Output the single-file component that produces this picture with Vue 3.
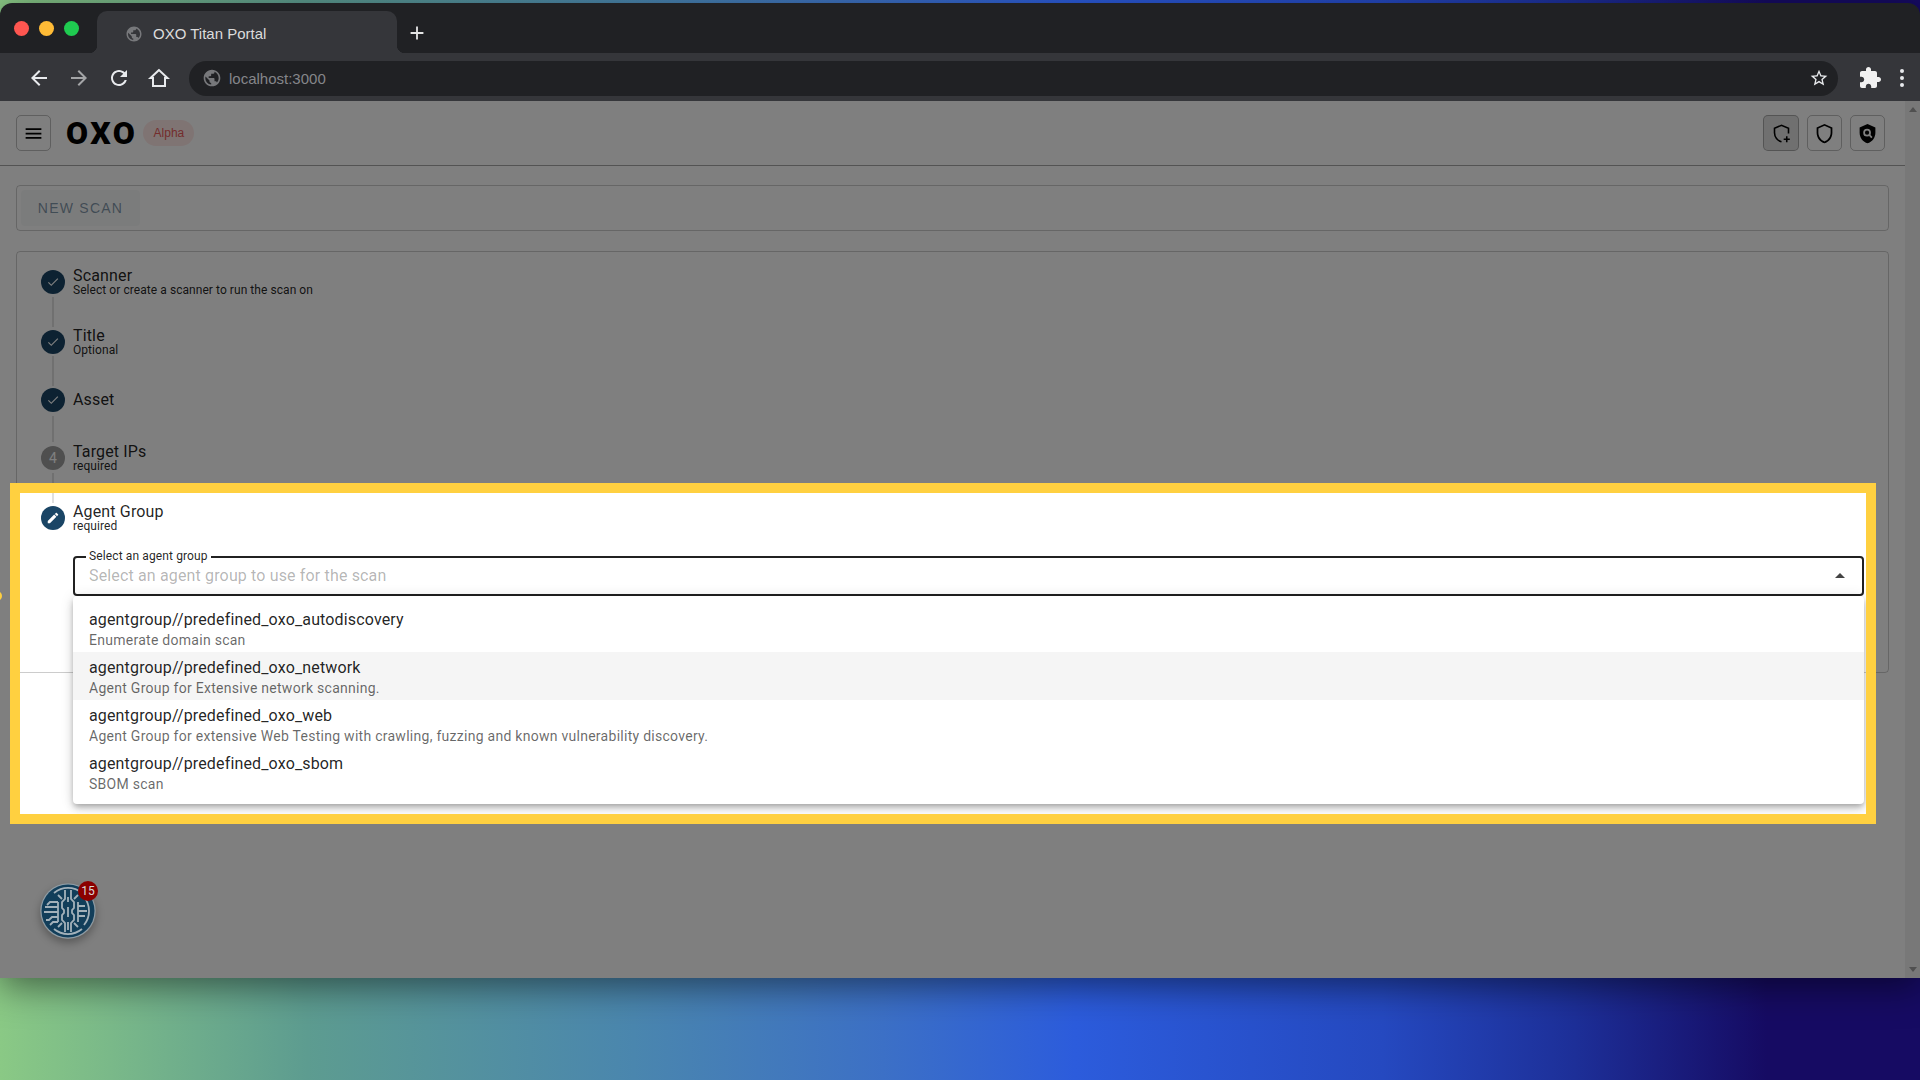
<script setup>
// 扫描向导页面，带引导高亮
const steps = [
  { title: 'Scanner', sub: 'Select or create a scanner to run the scan on', state: 'done', gap: 36, line: 30 },
  { title: 'Title', sub: 'Optional', state: 'done', gap: 34, line: 30 },
  { title: 'Asset', sub: '', state: 'done', gap: 34, line: 26 },
  { title: 'Target IPs', sub: 'required', state: 'todo', num: 4, gap: 36, line: 30 },
  { title: 'Agent Group', sub: 'required', state: 'edit', gap: 0, line: 0 }
]

const groups = [
  { name: 'agentgroup//predefined_oxo_autodiscovery', desc: 'Enumerate domain scan' },
  { name: 'agentgroup//predefined_oxo_network', desc: 'Agent Group for Extensive network scanning.', hover: true },
  { name: 'agentgroup//predefined_oxo_web', desc: 'Agent Group for extensive Web Testing with crawling, fuzzing and known vulnerability discovery.' },
  { name: 'agentgroup//predefined_oxo_sbom', desc: 'SBOM scan' }
]

const globe = 'M12 2C6.48 2 2 6.48 2 12s4.48 10 10 10 10-4.48 10-10S17.52 2 12 2zm-1 17.93c-3.95-.49-7-3.85-7-7.93 0-.62.08-1.21.21-1.79L9 15v1c0 1.1.9 2 2 2v1.93zm6.9-2.54c-.26-.81-1-1.39-1.9-1.39h-1v-3c0-.55-.45-1-1-1H8v-2h2c.55 0 1-.45 1-1V7h2c1.1 0 2-.9 2-2v-.41c2.93 1.19 5 4.06 5 7.41 0 2.08-.8 3.97-2.1 5.39z'
const arrow = 'M20 11H7.83l5.59-5.59L12 4l-8 8 8 8 1.41-1.41L7.83 13H20v-2z'
</script>

<template>
  <div class="desktop">
    <div class="window">
      <div class="tabstrip">
        <div class="lights">
          <span class="light red"></span>
          <span class="light yellow"></span>
          <span class="light green"></span>
        </div>
        <div class="tab">
          <svg class="tab-globe" viewBox="0 0 24 24"><path :d="globe" /></svg>
          <span>OXO Titan Portal</span>
        </div>
        <svg class="newtab" viewBox="0 0 24 24"><path d="M19 13h-6v6h-2v-6H5v-2h6V5h2v6h6v2z" /></svg>
      </div>

      <div class="toolbar">
        <div class="nav">
          <svg viewBox="0 0 24 24"><path :d="arrow" /></svg>
          <svg class="dimmed flip" viewBox="0 0 24 24"><path :d="arrow" /></svg>
          <svg viewBox="0 0 24 24"><path d="M17.65 6.35C16.2 4.9 14.21 4 12 4c-4.42 0-7.99 3.58-7.99 8s3.57 8 7.99 8c3.73 0 6.84-2.55 7.73-6h-2.08c-.82 2.33-3.04 4-5.65 4-3.31 0-6-2.69-6-6s2.69-6 6-6c1.66 0 3.14.69 4.22 1.78L13 11h7V4l-2.35 2.35z" /></svg>
          <svg viewBox="0 0 24 24"><path class="home" d="M12 4 3.5 12H6v8h12v-8h2.5z" /></svg>
        </div>
        <div class="urlbar">
          <svg class="url-globe" viewBox="0 0 24 24"><path :d="globe" /></svg>
          <span class="url">localhost:3000</span>
          <svg class="star" viewBox="0 0 24 24"><path d="M22 9.24l-7.19-.62L12 2 9.19 8.63 2 9.24l5.46 4.73L5.82 21 12 17.27 18.18 21l-1.63-7.03L22 9.24zM12 15.4l-3.76 2.27 1-4.28-3.32-2.88 4.38-.38L12 6.1l1.71 4.04 4.38.38-3.32 2.88 1 4.28L12 15.4z" /></svg>
        </div>
        <svg class="puzzle" viewBox="0 0 24 24"><path d="M20.5 11H19V7c0-1.1-.9-2-2-2h-4V3.5C13 2.12 11.88 1 10.5 1S8 2.12 8 3.5V5H4c-1.1 0-1.99.9-1.99 2v3.8H3.5c1.49 0 2.7 1.21 2.7 2.7s-1.21 2.7-2.7 2.7H2V20c0 1.1.9 2 2 2h3.8v-1.5c0-1.49 1.21-2.7 2.7-2.7 1.49 0 2.7 1.21 2.7 2.7V22H17c1.1 0 2-.9 2-2v-4h1.5c1.38 0 2.5-1.12 2.5-2.5S21.88 11 20.5 11z" /></svg>
        <div class="dots"><i></i><i></i><i></i></div>
      </div>

      <div class="page">
        <div class="content">
          <header class="appbar">
            <button class="icon-btn">
              <svg viewBox="0 0 24 24"><path d="M3,6H21V8H3V6M3,11H21V13H3V11M3,16H21V18H3V16Z" /></svg>
            </button>
            <span class="logo">OXO</span>
            <span class="chip">Alpha</span>
            <div class="spacer"></div>
            <button class="icon-btn active">
              <svg viewBox="0 0 24 24">
                <path class="stroke" d="M20 12V6l-8-3.4L4 6v5.2c0 4.9 3.4 9.2 8 10.3" />
                <path class="stroke" d="M14.5 18.5h7M18 15v7" />
              </svg>
            </button>
            <button class="icon-btn">
              <svg viewBox="0 0 24 24"><path d="M21,11C21,16.55 17.16,21.74 12,23C6.84,21.74 3,16.55 3,11V5L12,1L21,5V11M12,21C15.75,20 19,15.54 19,11.22V6.3L12,3.18L5,6.3V11.22C5,15.54 8.25,20 12,21Z" /></svg>
            </button>
            <button class="icon-btn">
              <svg viewBox="0 0 24 24">
                <path d="M21,11C21,16.55 17.16,21.74 12,23C6.84,21.74 3,16.55 3,11V5L12,1L21,5V11Z" />
                <circle class="lens" cx="11.5" cy="11" r="3.4" />
                <path class="lens" d="M14 13.6l3 3" />
              </svg>
            </button>
          </header>

          <main class="main">
            <div class="card scan-bar">
              <button class="new-scan">NEW SCAN</button>
            </div>

            <div class="card stepper">
              <template v-for="s in steps" :key="s.title">
                <div class="step">
                  <span class="circle" :class="s.state">
                    <svg v-if="s.state === 'done'" viewBox="0 0 24 24"><path d="M9 16.17L4.83 12l-1.42 1.41L9 19 21 7l-1.41-1.41z" /></svg>
                    <svg v-else-if="s.state === 'edit'" viewBox="0 0 24 24"><path d="M20.71,7.04C21.1,6.65 21.1,6 20.71,5.63L18.37,3.29C18,2.9 17.35,2.9 16.96,3.29L15.12,5.12L18.87,8.87M3,17.25V21H6.75L17.81,9.93L14.06,6.18L3,17.25Z" /></svg>
                    <template v-else>{{ s.num }}</template>
                  </span>
                  <div class="step-text">
                    <div class="step-title">{{ s.title }}</div>
                    <div v-if="s.sub" class="step-sub">{{ s.sub }}</div>
                  </div>
                </div>
                <div v-if="s.gap" class="rail" :style="{ height: s.gap + 'px' }">
                  <span class="rail-line" :style="{ height: s.line + 'px' }"></span>
                </div>
              </template>

              <div class="field">
                <span class="legend">Select an agent group</span>
                <span class="placeholder">Select an agent group to use for the scan</span>
                <span class="caret"></span>
                <div class="menu">
                  <div v-for="g in groups" :key="g.name" class="item" :class="{ hover: g.hover }">
                    <div class="item-name">{{ g.name }}</div>
                    <div class="item-desc">{{ g.desc }}</div>
                  </div>
                </div>
              </div>
            </div>
          </main>
        </div>

        <div class="scrollbar">
          <span class="sb-up"></span>
          <span class="sb-down"></span>
        </div>

        <!-- 引导高亮：靠 box-shadow 压暗其余部分 -->
        <div class="spotlight"></div>
        <span class="tour-dot"></span>

        <div class="fab">
          <svg viewBox="0 0 56 56">
            <circle cx="28" cy="28" r="27.5" fill="#8f9fa9" />
            <circle cx="28" cy="28" r="26.5" fill="#123e5a" />
            <g class="trace">
              <path d="M14 10a22 22 0 0 1 28 0M14 46a22 22 0 0 0 28 0" />
              <path d="M44 14a22 22 0 0 1 0 28" />
              <path d="M25 7v9l-3 3v6l2 2v3l-2 2v5l3 3v9" />
              <path d="M31 7v9l3 3v6l-2 2v3l2 2v5l-3 3v9" />
              <path d="M28 14v5M28 24v10M28 39v8" />
              <path d="M18 19H10l-3 3M18 24H5M18 29H4M18 34h-6l-3 3h-3M18 39h-5l-3 3" />
              <path d="M18 19v20M38 19v20" />
              <path d="M38 23h7M38 28h9M38 33h7" />
              <path d="M18 12l4 4M38 12l-4 4M18 44l4-4M38 44l-4-4" />
            </g>
          </svg>
          <span class="fab-badge">15</span>
        </div>
      </div>
    </div>
  </div>
</template>

<style scoped>
.desktop {
  width: 1920px;
  height: 1080px;
  padding-top: 3px;
  box-sizing: border-box;
  overflow: hidden;
  background: linear-gradient(90deg, #8ac985 0%, #5d9c90 16%, #4a86ae 33%, #3c70c6 46%, #2c5cdc 56%, #2549c0 72%, #1d2f98 82%, #160b63 92%, #160b63 100%);
  font-family: Roboto, "Liberation Sans", sans-serif;
}

.window {
  height: 975px;
  display: flex;
  flex-direction: column;
  border-radius: 12px 12px 0 0;
  overflow: hidden;
  box-shadow: 0 8px 36px rgba(0, 0, 0, 0.5);
}

.tabstrip {
  height: 50px;
  background: #202124;
  display: flex;
  align-items: flex-end;
  flex: none;
}

.lights {
  display: flex;
  gap: 10px;
  padding: 18px 0 0 14px;
  width: 97px;
  box-sizing: border-box;
  align-self: flex-start;
}

.light {
  width: 15px;
  height: 15px;
  border-radius: 50%;
  flex: none;
}

.red { background: #fe5650; }
.yellow { background: #ffbb36; }
.green { background: #1fcb50; }

.tab {
  position: relative;
  width: 300px;
  height: 42px;
  background: #35363a;
  border-radius: 10px 10px 0 0;
  display: flex;
  align-items: center;
  gap: 10px;
  padding: 3px 0 0 28px;
  box-sizing: border-box;
  color: #dcdcdc;
  font: 15px "Liberation Sans", sans-serif;
}

.tab::before,
.tab::after {
  content: '';
  position: absolute;
  bottom: 0;
  width: 8px;
  height: 8px;
}

.tab::before {
  left: -8px;
  background: radial-gradient(circle at 0 0, #202124 8px, #35363a 8.5px);
}

.tab::after {
  right: -8px;
  background: radial-gradient(circle at 100% 0, #202124 8px, #35363a 8.5px);
}

.tab-globe {
  width: 18px;
  height: 18px;
  fill: #77787b;
}

.newtab {
  width: 22px;
  height: 22px;
  fill: #e4e4e4;
  margin: 0 0 9px 9px;
}

.toolbar {
  height: 48px;
  background: #35363a;
  display: flex;
  align-items: center;
  flex: none;
}

.nav {
  display: flex;
  gap: 16px;
  padding-left: 27px;
  width: 189px;
  box-sizing: border-box;
  flex: none;
  margin-top: 2px;
}

.nav svg {
  width: 24px;
  height: 24px;
  fill: #e8eaed;
}

.nav .dimmed { fill: #a4a5a7; }
.nav .flip { transform: scaleX(-1); }

.nav .home {
  fill: none;
  stroke: #e8eaed;
  stroke-width: 2;
}

.urlbar {
  width: 1649px;
  height: 35px;
  border-radius: 18px;
  background: #202124;
  display: flex;
  align-items: center;
  padding: 0 9px 0 13px;
  box-sizing: border-box;
  flex: none;
  margin-top: 2px;
}

.url-globe {
  width: 20px;
  height: 20px;
  fill: #77787b;
}

.url {
  margin-left: 7px;
  color: #85868a;
  font: 15px "Liberation Sans", sans-serif;
  flex: 1;
}

.star {
  width: 20px;
  height: 20px;
  fill: #e8eaed;
}

.puzzle {
  width: 24px;
  height: 24px;
  fill: #f1f1f1;
  margin: 2px 0 0 20px;
  flex: none;
}

.dots {
  display: flex;
  flex-direction: column;
  gap: 3px;
  margin: 2px 0 0 18px;
}

.dots i {
  width: 4px;
  height: 4px;
  border-radius: 50%;
  background: #e8eaed;
}

.page {
  flex: 1;
  position: relative;
  overflow: hidden;
  background: #fff;
  display: flex;
}

.content {
  width: 1905px;
  flex: none;
}

.appbar {
  height: 65px;
  box-sizing: border-box;
  border-bottom: 1px solid rgba(0, 0, 0, 0.35);
  display: flex;
  align-items: center;
  gap: 8px;
  padding: 0 20px 0 16px;
  margin-bottom: 19px;
}

.icon-btn {
  width: 35px;
  height: 36px;
  padding: 0;
  background: none;
  border: 1px solid rgba(0, 0, 0, 0.25);
  border-radius: 5px;
  display: flex;
  align-items: center;
  justify-content: center;
}

.icon-btn.active {
  width: 36px;
  background: rgba(0, 0, 0, 0.12);
}

.icon-btn svg {
  width: 21px;
  height: 21px;
  fill: #000;
}

.icon-btn .stroke {
  fill: none;
  stroke: #000;
  stroke-width: 1.8;
}

.icon-btn .lens {
  fill: none;
  stroke: #fff;
  stroke-width: 2;
}

.logo {
  margin-left: 7px;
  font: 900 32px Roboto, "Liberation Sans", sans-serif;
  color: #000;
  letter-spacing: 2.5px;
}

.chip {
  height: 26px;
  width: 51px;
  margin-left: -2px;
  border-radius: 13px;
  background: rgba(244, 67, 54, 0.12);
  color: #e85a5a;
  font: 12px/26px "Liberation Sans", sans-serif;
  text-align: center;
}

.spacer { flex: 1; }

.main {
  padding: 0 16px;
  display: flex;
  flex-direction: column;
  gap: 20px;
}

.card {
  border: 1px solid rgba(0, 0, 0, 0.2);
  border-radius: 4px;
  box-sizing: border-box;
}

.scan-bar {
  height: 46px;
  padding: 4px;
}

.new-scan {
  width: 119px;
  height: 36px;
  border: 0;
  border-radius: 4px;
  background: rgba(26, 69, 101, 0.04);
  color: rgba(26, 69, 101, 0.55);
  font: 14px "Liberation Sans", sans-serif;
  letter-spacing: 1.25px;
}

.stepper {
  height: 422px;
  padding: 18px 24px 0;
}

.step {
  display: flex;
  align-items: center;
  gap: 8px;
  height: 24px;
}

.circle {
  width: 24px;
  height: 24px;
  border-radius: 50%;
  flex: none;
  display: flex;
  align-items: center;
  justify-content: center;
  color: #fff;
  font-size: 14px;
  background: #1a4565;
}

.circle.todo { background: #9e9e9e; }

.circle svg {
  width: 14px;
  height: 14px;
  fill: #fff;
}

.step-title {
  font-size: 16px;
  line-height: 16px;
  letter-spacing: 0.15px;
  color: rgba(0, 0, 0, 0.87);
}

.step-sub {
  font-size: 12px;
  line-height: 12px;
  letter-spacing: 0.06px;
  color: rgba(0, 0, 0, 0.87);
}

.rail {
  display: flex;
  align-items: center;
  padding-left: 11px;
}

.rail-line {
  width: 2px;
  background: #e0e0e0;
}

.field {
  position: relative;
  margin-top: 26px;
  height: 40px;
  margin-left: 32px;
  border: 2px solid #212121;
  border-radius: 4px;
  box-sizing: border-box;
  display: flex;
  align-items: center;
  padding: 0 0 1px 14px;
}

.legend {
  position: absolute;
  left: 11px;
  top: -9px;
  padding: 0 3px;
  background: #fff;
  font-size: 12px;
  line-height: 14px;
  letter-spacing: 0.12px;
  color: rgba(0, 0, 0, 0.87);
}

.placeholder {
  font-size: 16px;
  letter-spacing: 0.15px;
  color: rgba(0, 0, 0, 0.3);
}

.caret {
  position: absolute;
  right: 17px;
  top: 15px;
  border-left: 5px solid transparent;
  border-right: 5px solid transparent;
  border-bottom: 5px solid #444;
}

.menu {
  position: absolute;
  left: -2px;
  right: -2px;
  top: 38px;
  padding: 8px 0;
  background: #fff;
  border-radius: 4px;
  box-shadow: 0 3px 5px -1px rgba(0, 0, 0, 0.2), 0 5px 8px rgba(0, 0, 0, 0.14), 0 1px 14px rgba(0, 0, 0, 0.12);
  z-index: 2;
}

.item {
  height: 48px;
  padding: 6px 16px 0;
  box-sizing: border-box;
}

.item.hover { background: #f5f5f5; }

.item-name {
  font-size: 16px;
  line-height: 20px;
  letter-spacing: 0.15px;
  color: rgba(0, 0, 0, 0.87);
}

.item-desc {
  font-size: 14px;
  line-height: 20px;
  letter-spacing: 0.27px;
  color: rgba(0, 0, 0, 0.6);
}

.scrollbar {
  width: 15px;
  flex: none;
  background: #f1f1f1;
  position: relative;
}

.sb-up,
.sb-down {
  position: absolute;
  left: 4px;
  border-left: 4px solid transparent;
  border-right: 4px solid transparent;
}

.sb-up {
  top: 6px;
  border-bottom: 5px solid #a0a0a0;
}

.sb-down {
  bottom: 6px;
  border-top: 5px solid #a0a0a0;
}

.spotlight {
  position: absolute;
  left: 10px;
  top: 382px;
  width: 1866px;
  height: 341px;
  box-sizing: border-box;
  border: 10px solid #ffd040;
  box-shadow: 0 0 0 3000px rgba(0, 0, 0, 0.5);
  z-index: 3;
}

.tour-dot {
  position: absolute;
  left: -8px;
  top: 490px;
  width: 10px;
  height: 10px;
  border-radius: 50%;
  background: #ffd040;
  z-index: 4;
}

.fab {
  position: absolute;
  left: 40px;
  top: 782px;
  width: 56px;
  height: 56px;
  border-radius: 50%;
  box-shadow: 0 4px 8px rgba(0, 0, 0, 0.3);
  z-index: 4;
}

.fab svg {
  display: block;
  width: 56px;
  height: 56px;
}

.trace {
  fill: none;
  stroke: #a3b1ba;
  stroke-width: 1.8;
}

.fab-badge {
  position: absolute;
  left: 38px;
  top: -2px;
  width: 20px;
  height: 20px;
  border-radius: 50%;
  background: #8b0000;
  color: #d9d9d9;
  font-size: 12px;
  line-height: 20px;
  text-align: center;
}
</style>

<style>
html, body {
  margin: 0;
  background: #000;
}
</style>
